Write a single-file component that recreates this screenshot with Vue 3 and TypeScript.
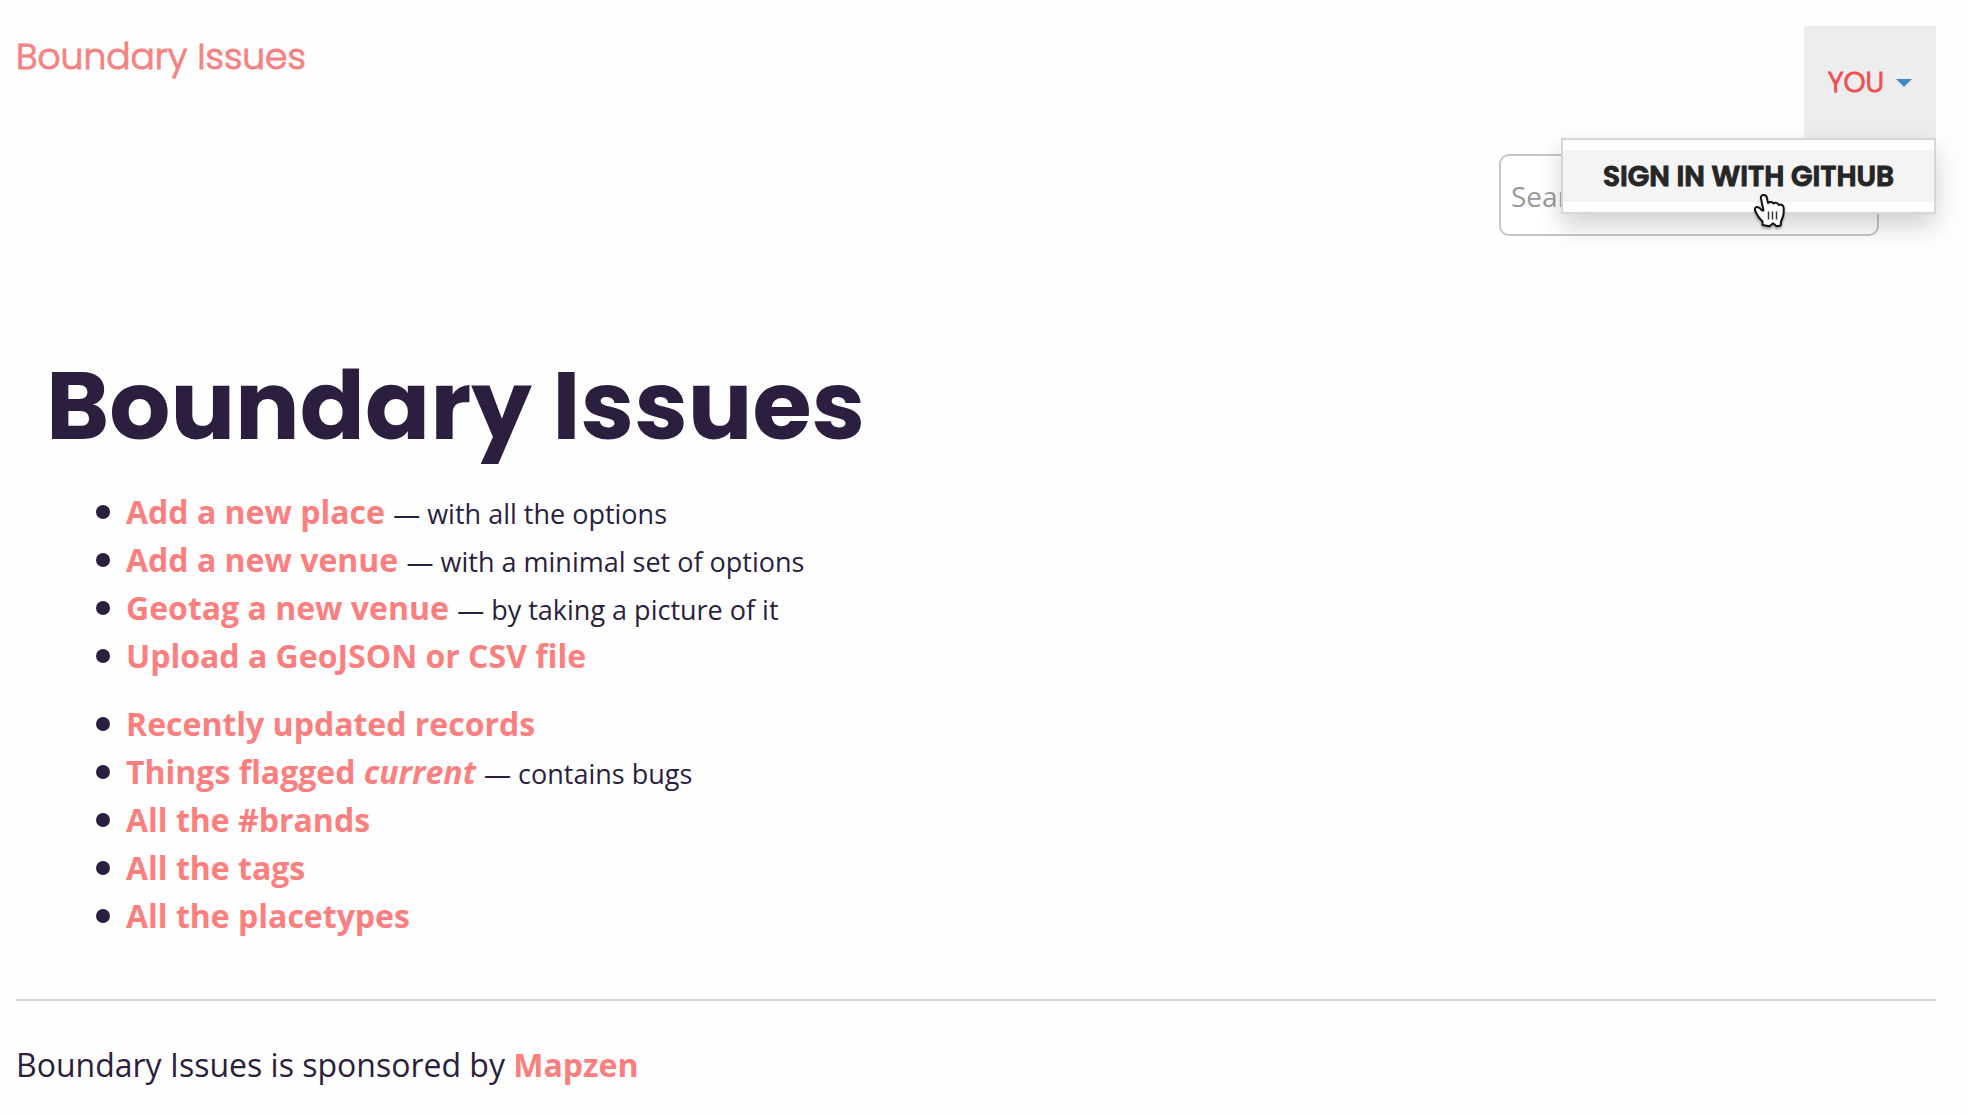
<script setup lang="ts">
import { ref } from 'vue'

interface Item {
  label: string
  em?: string
  note?: string
}

const groups: Item[][] = [
  [
    { label: 'Add a new place', note: '— with all the options' },
    { label: 'Add a new venue', note: '— with a minimal set of options' },
    { label: 'Geotag a new venue', note: '— by taking a picture of it' },
    { label: 'Upload a GeoJSON or CSV file' },
  ],
  [
    { label: 'Recently updated records' },
    { label: 'Things flagged', em: 'current', note: '— contains bugs' },
    { label: 'All the #brands' },
    { label: 'All the tags' },
    { label: 'All the placetypes' },
  ],
]

const open = ref(true)
const query = ref('')
</script>

<template>
  <div class="page">
    <header class="bar">
      <a class="brand" href="#">Boundary Issues</a>
      <nav class="account">
        <button class="toggle" type="button" :aria-expanded="open" @click="open = !open">
          YOU <span class="caret"></span>
        </button>
        <div v-if="open" class="menu">
          <a class="menu-item" href="#signin">SIGN IN WITH GITHUB</a>
          <svg class="pointer" viewBox="0 0 32 36" aria-hidden="true">
            <path
              d="M7 4.500C6.500 2.500 7.500 1 9.500 1s3 1 3.300 2.500L14 9c1.500-1.500 4.500-1.500 5.500.5 1.500-1.300 4.500-.8 5.200 1.500 2-1 5 0 5 3v4c0 3-.5 4.500-1.700 7-.8 1.700-1.300 3-1.300 6.500l-4 .8-3.700-3-3.500 3L8.500 31v-3.500L4.500 23 1.500 17.500C.5 15.500.8 13 3 13c1.800 0 3.500 1.500 5 3.500h1.500z"
              fill="#fff" stroke="#151515" stroke-width="2" stroke-linejoin="round"
            />
            <path d="M14.500 17.500v8M18.500 17.500v8M22.500 17.500v8" stroke="#333" stroke-width="1.500" />
          </svg>
        </div>
      </nav>
    </header>

    <form class="search" role="search" @submit.prevent>
      <input v-model="query" type="text" aria-label="Search for a place" placeholder="Search for a place" />
    </form>

    <main class="content">
      <h1>Boundary Issues</h1>
      <ul v-for="(group, g) in groups" :key="g">
        <li v-for="item in group" :key="item.label">
          <div>
            <a href="#">{{ item.label }}<em v-if="item.em">{{ ' ' + item.em }}</em></a>{{ ' ' }}<small v-if="item.note">{{ item.note }}</small>
          </div>
        </li>
      </ul>
    </main>

    <footer>Boundary Issues is sponsored by <a href="#mapzen">Mapzen</a></footer>
  </div>
</template>

<style>
body {
  background: #fefefe;
}
</style>

<style scoped>
.page {
  padding: 26px 32px 0 16px;
  color: #2b1e3e;
  font-family: 'Open Sans', 'Noto Sans', sans-serif;
  font-size: 32px;
  line-height: 48px;
}

a {
  color: #fc7f7f;
  font-weight: 700;
  text-decoration: none;
}

.bar {
  display: flex;
  justify-content: space-between;
  align-items: flex-start;
}

.brand {
  padding-top: 7px;
  color: #f58282;
  font-family: Poppins, Inter, sans-serif;
  font-size: 36px;
  font-weight: 300;
  -webkit-text-stroke: 1px currentColor;
}

.account {
  position: relative;
}

.toggle {
  display: flex;
  align-items: center;
  gap: 12px;
  height: 112px;
  padding: 2px 24px 0;
  border: 0;
  background: #ededed;
  color: #f04e4e;
  font-family: Poppins, Inter, sans-serif;
  font-size: 28px;
  font-weight: 300;
  -webkit-text-stroke: 1px currentColor;
}

.caret {
  border: 8px solid transparent;
  border-top-color: #428bca;
  border-bottom: 0;
}

.menu {
  position: absolute;
  top: 100%;
  right: 0;
  z-index: 1;
  padding: 10px 0;
  border: 2px solid #d6d6d6;
  background: #fff;
  box-shadow: 0 12px 24px rgba(0, 0, 0, 0.18);
}

.menu-item {
  display: block;
  padding: 2px 40px 0;
  background: #f4f4f4;
  color: #262626;
  font-family: Poppins, Inter, sans-serif;
  font-size: 28px;
  font-weight: 600;
  line-height: 50px;
  white-space: nowrap;
  -webkit-text-stroke: 1px currentColor;
}

.pointer {
  position: absolute;
  top: 54px;
  right: 148px;
  width: 32px;
  height: 36px;
  filter: drop-shadow(0 2px 1px rgba(0, 0, 0, 0.3));
}

.search {
  display: flex;
  justify-content: flex-end;
  padding: 16px 57px 0 0;
}

.search input {
  box-sizing: border-box;
  width: 380px;
  height: 82px;
  padding: 2px 10px 0;
  border: 2px solid #c6c6c6;
  border-radius: 10px;
  background: #fff;
  color: #2b1e3e;
  font: inherit;
  font-size: 28px;
}

.search input::placeholder {
  color: #999;
}

.content {
  padding: 112px 30px 39px;
}

h1 {
  margin: 0 0 24px;
  font-family: Poppins, Inter, sans-serif;
  font-size: 96px;
  font-weight: 700;
  line-height: 116px;
}

ul {
  margin: 0 0 20px;
  padding: 0 0 0 50px;
  list-style: none;
}

li {
  display: flex;
  align-items: center;
  gap: 16px;
}

li::before {
  content: '';
  width: 14px;
  height: 14px;
  border-radius: 50%;
  background: #2b1e3e;
}

small {
  font-size: 27px;
  line-height: 1;
}

footer {
  padding: 40px 0 24px;
  border-top: 2px solid #d3d3d3;
}
</style>
